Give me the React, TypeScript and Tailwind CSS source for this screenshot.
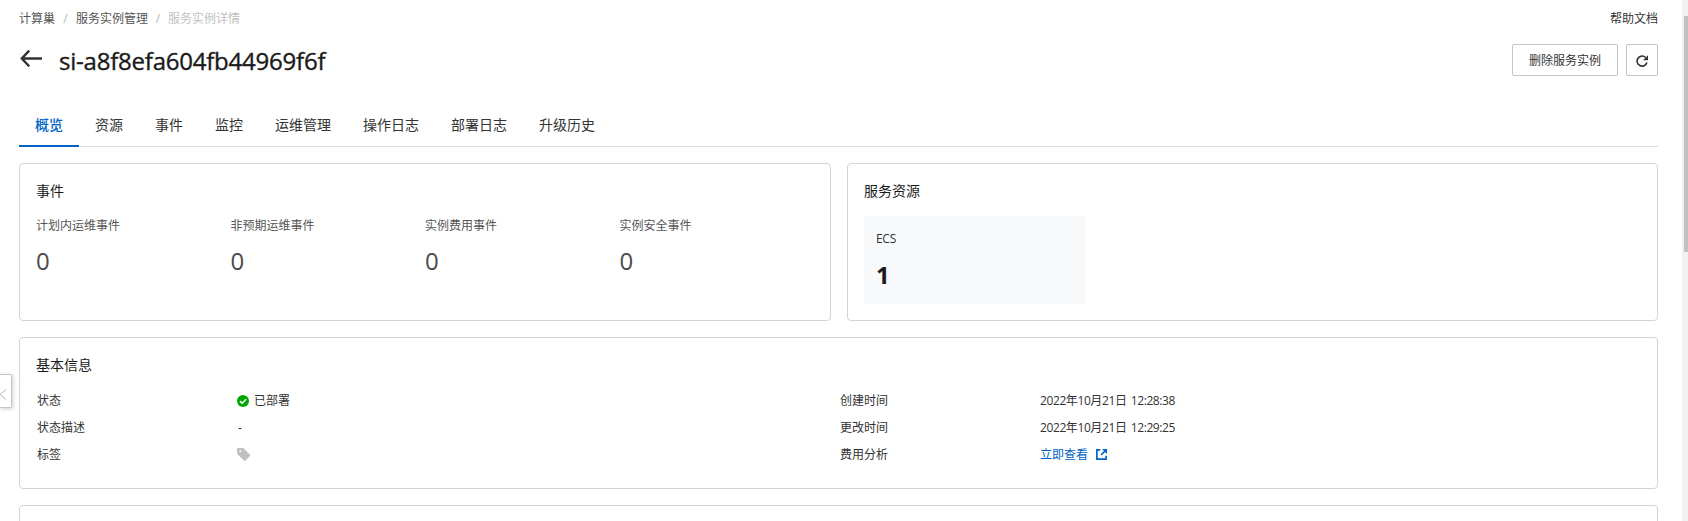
import React from "react";

const tabs = ["概览", "资源", "事件", "监控", "运维管理", "操作日志", "部署日志", "升级历史"];
const events = ["计划内运维事件", "非预期运维事件", "实例费用事件", "实例安全事件"];

function Breadcrumb() {
  return (
    <div className="flex h-[37px] items-center justify-between pt-px text-xs">
      <nav className="flex items-center text-[#555555]">
        <span>计算巢</span>
        <span className="w-[21px] text-center text-[#b5b5b5]">/</span>
        <span>服务实例管理</span>
        <span className="w-5 text-center text-[#b5b5b5]">/</span>
        <span className="text-[#c1c1c1]">服务实例详情</span>
      </nav>
      <a className="text-[#333333]">帮助文档</a>
    </div>
  );
}

function Header() {
  return (
    <header className="flex h-[60px] items-start justify-between pt-[7px]">
      <div className="flex items-start">
        <svg className="mt-[5px] ml-px h-[18px] w-[22px]" viewBox="0 0 22 18" fill="none" stroke="#333" strokeWidth="2.4">
          <path d="M9.2 1.7 1.8 9.5l7.4 7.8M2 9.5H22" />
        </svg>
        <h1 className="ml-[17px] text-2xl leading-[34px] font-medium tracking-[-0.22px] text-[#1a1a1a] [-webkit-text-stroke:0.35px_#1a1a1a]">
          si-a8f8efa604fb44969f6f
        </h1>
      </div>
      <div className="flex gap-2">
        <button className="h-8 w-[106px] rounded-[2px] border border-[#c0c6cc] pt-px text-xs text-[#333333]">
          删除服务实例
        </button>
        <button className="flex h-8 w-8 items-center justify-center rounded-[2px] border border-[#c0c6cc] pt-px">
          <svg className="h-3 w-3" viewBox="0 0 12 12">
            <path d="M10.9 7.5A5 5 0 1 1 9.6 2.5" fill="none" stroke="#333" strokeWidth="1.6" />
            <path d="M12 .2V5.2H7z" fill="#333" />
          </svg>
        </button>
      </div>
    </header>
  );
}

function Tabs() {
  return (
    <div className="flex h-[50px] border-b border-[#dedede] text-sm text-[#333333]">
      {tabs.map((t, i) => (
        <div
          key={t}
          className={
            i === 0
              ? "-mb-px h-[50px] border-b-2 border-[#0064c8] px-4 pt-[17px] leading-[22px] font-medium text-[#0064c8]"
              : "h-[49px] px-4 pt-[17px] leading-[22px]"
          }
        >
          {t}
        </div>
      ))}
    </div>
  );
}

function Card({ title, className, children }: { title: string; className: string; children?: React.ReactNode }) {
  return (
    <section className={"rounded border border-[#d1d3d6] px-4 pt-4 " + className}>
      <h2 className="text-sm leading-[22px] text-[#1a1a1a]">{title}</h2>
      {children}
    </section>
  );
}

function Row({ label, children }: { label: string; children: React.ReactNode }) {
  return (
    <div className="flex h-[27px] items-center">
      <dt className="w-[200px]">{label}</dt>
      <dd className="flex items-center">{children}</dd>
    </div>
  );
}

function BasicInfo() {
  return (
    <Card title="基本信息" className="mt-4 h-[152px]">
      <div className="mt-[11px] flex pl-px text-xs text-[#333333]">
        <dl className="w-[803px]">
          <Row label="状态">
            <svg className="mr-[5px] h-3 w-3" viewBox="0 0 12 12">
              <circle cx="6" cy="6" r="6" fill="#00a700" />
              <path d="M3 6.1 5.2 8.2 9.1 4.2" fill="none" stroke="#fff" strokeWidth="1.5" />
            </svg>
            已部署
          </Row>
          <Row label="状态描述">
            <span className="pl-px">-</span>
          </Row>
          <Row label="标签">
            <svg className="h-[13px] w-[13px]" viewBox="0 0 13 13">
              <path
                fillRule="evenodd"
                fill="#c1c1c1"
                d="M1 0h5.4L13 6.8a.8.8 0 0 1 0 1.1L8.3 12.7a.8.8 0 0 1-1.1 0L0 5.8V1a1 1 0 0 1 1-1zM3.3 2.3a1 1 0 1 0 0 2 1 1 0 0 0 0-2z"
              />
            </svg>
          </Row>
        </dl>
        <dl>
          <Row label="创建时间">
            <span className="tracking-[-0.4px] [word-spacing:1.5px]">2022年10月21日 12:28:38</span>
          </Row>
          <Row label="更改时间">
            <span className="tracking-[-0.4px] [word-spacing:1.5px]">2022年10月21日 12:29:25</span>
          </Row>
          <Row label="费用分析">
            <a className="flex items-center text-[#0064c8]">
              立即查看
              <svg className="ml-2 h-[11px] w-[11px]" viewBox="0 0 11 11" fill="none" stroke="#0064c8" strokeWidth="1.7">
                <path d="M4.3.9H.9v9.2h9.2V6.7M5 6l4-4" />
                <path d="M6 0H11v5z" fill="#0064c8" stroke="none" />
              </svg>
            </a>
          </Row>
        </dl>
      </div>
    </Card>
  );
}

export default function App() {
  return (
    <div className="relative flex h-[521px] w-full overflow-hidden bg-white font-['Open_Sans','Noto_Sans_CJK_SC',sans-serif]">
      <main className="ml-[19px] w-[1639px] shrink-0">
        <Breadcrumb />
        <Header />
        <Tabs />
        <div className="mt-4 flex gap-4">
          <Card title="事件" className="h-[158px] w-[812px]">
            <div className="mt-[15px] grid grid-cols-4">
              {events.map((e) => (
                <div key={e}>
                  <div className="text-xs leading-[18px] text-[#555555]">{e}</div>
                  <div className="mt-2 text-2xl leading-9 tracking-[-0.5px] text-[#4a4a4a]">0</div>
                </div>
              ))}
            </div>
          </Card>
          <Card title="服务资源" className="h-[158px] w-[811px]">
            <div className="mt-[14px] h-[88px] w-[222px] rounded bg-[#f7f9fb] px-3 pt-[14px]">
              <div className="text-xs leading-[18px] tracking-[-0.3px] text-[#333333]">ECS</div>
              <div className="mt-[9px] text-2xl leading-9 font-bold text-[#1a1a1a]">1</div>
            </div>
          </Card>
        </div>
        <BasicInfo />
        <section className="mt-4 h-10 rounded border border-[#d1d3d6]" />
      </main>
      <div className="ml-6 w-1.5 bg-[#f1f1f1] pt-4 pl-0.5">
        <div className="h-[236px] bg-[#c1c1c1]" />
      </div>
      <button className="absolute top-[374px] left-0 flex h-[34px] w-3 items-center rounded-r-[2px] border border-l-0 border-[#c0c6cc] bg-white pt-1.5 shadow-[1px_1px_4px_rgba(0,0,0,0.2)]">
        <svg className="h-[11px] w-1.5" viewBox="0 0 6 11" fill="none" stroke="#b5b5b5">
          <path d="M6 .5 0 5.5 6 10.5" />
        </svg>
      </button>
    </div>
  );
}
